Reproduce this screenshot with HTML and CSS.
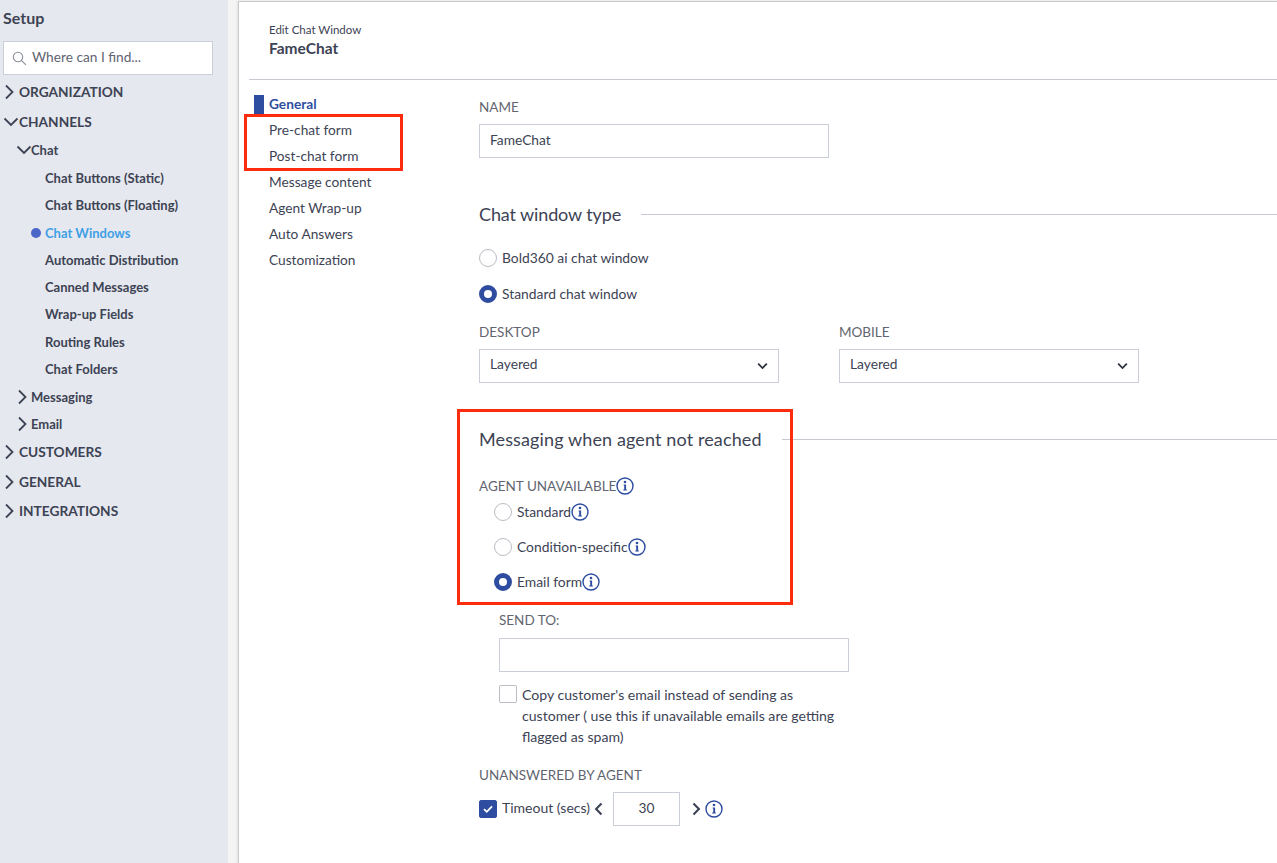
FILE: index.html
```html
<!DOCTYPE html>
<html lang="en">
<head>
<meta charset="utf-8">
<title>Edit Chat Window</title>
<link rel="stylesheet" href="styles.css">
</head>
<body>
<svg class="defs" width="0" height="0" aria-hidden="true">
  <symbol id="r" viewBox="0 0 12 16"><path d="M3 1.5 9.5 8 3 14.5" fill="none" stroke="currentColor"/></symbol>
  <symbol id="d" viewBox="0 0 16 12"><path d="M1.5 2.5 8 9l6.5-6.5" fill="none" stroke="currentColor"/></symbol>
  <symbol id="i" viewBox="0 0 18 18"><circle cx="9" cy="9" r="8" fill="none" stroke="currentColor" stroke-width="1.4"/><circle cx="9" cy="5" r="1.3" fill="currentColor"/><path d="M7.6 7.6h2.5v5h.8v1H7.2v-1h1V8.6h-.6z" fill="currentColor"/></symbol>
</svg>
<div class="app">
  <aside class="side">
    <h1 class="side-title">Setup</h1>
    <div class="search">
      <svg class="search-ico" viewBox="0 0 14 14"><circle cx="5.6" cy="5.6" r="4.4" fill="none" stroke="currentColor" stroke-width="1"/><path d="M8.8 8.8 13 13" stroke="currentColor" stroke-width="1.1" fill="none"/></svg>
      <span>Where can I find...</span>
    </div>
    <div class="n1 n-org"><svg class="car"><use href="#r"/></svg>ORGANIZATION</div>
    <div class="n1 n-chan"><svg class="car-d"><use href="#d"/></svg>CHANNELS</div>
    <div class="n2 n-chat"><svg class="car-d"><use href="#d"/></svg>Chat</div>
    <div class="n3 s1">Chat Buttons (Static)</div>
    <div class="n3">Chat Buttons (Floating)</div>
    <div class="n3 on"><i class="dot"></i>Chat Windows</div>
    <div class="n3">Automatic Distribution</div>
    <div class="n3">Canned Messages</div>
    <div class="n3">Wrap-up Fields</div>
    <div class="n3">Routing Rules</div>
    <div class="n3">Chat Folders</div>
    <div class="n2 n-msg"><svg class="car"><use href="#r"/></svg>Messaging</div>
    <div class="n2 n-eml"><svg class="car"><use href="#r"/></svg>Email</div>
    <div class="n1 n-cust"><svg class="car"><use href="#r"/></svg>CUSTOMERS</div>
    <div class="n1 n-gen"><svg class="car"><use href="#r"/></svg>GENERAL</div>
    <div class="n1 n-int"><svg class="car"><use href="#r"/></svg>INTEGRATIONS</div>
  </aside>
  <main class="panel">
    <header class="head">
      <div class="crumb">Edit Chat Window</div>
      <div class="name">FameChat</div>
    </header>
    <div class="body">
      <nav class="tabs">
        <div class="tab active">General</div>
        <div class="tab">Pre-chat form</div>
        <div class="tab">Post-chat form</div>
        <div class="tab">Message content</div>
        <div class="tab">Agent Wrap-up</div>
        <div class="tab">Auto Answers</div>
        <div class="tab">Customization</div>
      </nav>
      <section class="form">
        <label class="lbl">NAME</label>
        <div class="input name-in">FameChat</div>
        <div class="sec sec-type"><h2>Chat window type</h2><span class="rule"></span></div>
        <div class="radio r-bold"><i class="rb"></i>Bold360 ai chat window</div>
        <div class="radio r-std"><i class="rb sel"></i>Standard chat window</div>
        <div class="selects">
          <div class="sel-col">
            <label class="lbl">DESKTOP</label>
            <div class="input select">Layered<svg class="chev"><use href="#d"/></svg></div>
          </div>
          <div class="sel-col">
            <label class="lbl">MOBILE</label>
            <div class="input select">Layered<svg class="chev"><use href="#d"/></svg></div>
          </div>
        </div>
        <div class="sec sec-msg"><h2>Messaging when agent not reached</h2><span class="rule"></span></div>
        <div class="lbl lbl-au">AGENT UNAVAILABLE<svg class="info"><use href="#i"/></svg></div>
        <div class="sub">
          <div class="radio r-a"><i class="rb"></i>Standard<svg class="info"><use href="#i"/></svg></div>
          <div class="radio r-b"><i class="rb"></i>Condition-specific<svg class="info"><use href="#i"/></svg></div>
          <div class="radio r-c"><i class="rb sel"></i>Email form<svg class="info"><use href="#i"/></svg></div>
        </div>
        <div class="send">
          <label class="lbl">SEND TO:</label>
          <div class="input send-in"></div>
          <div class="copy"><i class="cb"></i><p>Copy customer's email instead of sending as customer ( use this if unavailable emails are getting flagged as spam)</p></div>
        </div>
        <label class="lbl lbl-un">UNANSWERED BY AGENT</label>
        <div class="timeout">
          <i class="cb checked"><svg viewBox="0 0 18 18"><path d="M4.5 9.2 7.6 12.2 13.5 6" fill="none" stroke="#fff" stroke-width="2"/></svg></i>
          <span class="t-lbl">Timeout (secs)</span>
          <svg class="step step-l"><use href="#r"/></svg>
          <div class="input num">30</div>
          <svg class="step"><use href="#r"/></svg>
          <svg class="info t-info"><use href="#i"/></svg>
        </div>
      </section>
    </div>
  </main>
</div>
<div class="mark mark-a"></div>
<div class="mark mark-b"></div>
</body>
</html>
```
FILE: styles.css
```css
* { box-sizing: border-box; }
html, body { margin: 0; height: 100%; overflow: hidden; }
body { font-family: "Lato", "Liberation Sans", sans-serif; color: #3d4354; background: #f4f4f5; font-size: 14px; }
.defs { position: absolute; }
.app { display: flex; height: 863px; }
.side { width: 228px; flex: none; background: #e5e8ee; padding: 9px 15px 0 3px; color: #3d4354; font-weight: 700; }
.side-title { margin: 0 0 15px; font-size: 16px; line-height: 17px; font-weight: 700; }
.search { height: 34px; width: 210px; margin-left: 0; background: #fff; border: 1px solid #c9ced8; display: flex; align-items: center; padding-left: 8px; font-weight: 400; color: #5f6472; font-size: 13.7px; line-height: 28px; }
.search span { margin: -3px 0 0 -1px; }
.search-ico { width: 15px; height: 15px; margin-right: 6px; color: #8a8f9a; }
.car { width: 12px; height: 16px; margin-right: 4px; flex: none; stroke-width: 1.8; }
.car-d { width: 16px; height: 12px; margin-right: 0; flex: none; stroke-width: 1.8; }
.n1 { display: flex; align-items: center; font-size: 13.7px; line-height: 18px; padding-left: 0; }
.n2 { display: flex; align-items: center; font-size: 13px; line-height: 18px; padding-left: 13px; }
.n2 .car-d { margin-right: -1px; }
.n2 .car { margin-right: 3px; }
.n3 { font-size: 13px; line-height: 18px; padding-left: 42px; margin-top: 9.3px; position: relative; white-space: nowrap; }
.n-org { margin-top: 8px; }
.n-chan { margin-top: 12px; }
.n-chat { margin-top: 10px; }
.n3.s1 { margin-top: 10px; }
.n-msg { margin-top: 10px; }
.n-eml { margin-top: 9px; }
.n-cust { margin-top: 10px; }
.n-gen { margin-top: 12px; }
.n-int { margin-top: 11px; }
.on { color: #3fa0e6; }
.dot { position: absolute; left: 28px; top: 4px; width: 10px; height: 10px; border-radius: 50%; background: #4a66c8; }
.panel { width: 1039px; margin: 1px 0 0 10px; background: #fff; border-left: 1px solid #c7c9cd; border-top: 1px solid #c7c9cd; box-shadow: -1px 0 2px rgba(0,0,0,.08); padding-left: 10px; }
.head { height: 78px; border-bottom: 1px solid #c7cad0; padding: 21px 0 0 20px; }
.crumb { font-size: 11.5px; line-height: 14px; color: #3d4354; }
.name { font-size: 15.5px; line-height: 18px; font-weight: 700; margin-top: 2px; }
.body { display: flex; }
.tabs { width: 230px; flex: none; padding-top: 11px; }
.tab { height: 26px; line-height: 26px; padding-left: 20px; font-size: 13.7px; position: relative; }
.tab.active { font-weight: 700; color: #2f4da0; }
.tab.active::before { content: ""; position: absolute; left: 5px; top: 4px; width: 10px; height: 19px; background: #2f4da0; }
.form { flex: 1; padding-top: 19px; min-width: 0; }
.lbl { display: block; font-size: 13.5px; line-height: 16px; color: #62656f; }
.input { height: 34px; border: 1px solid #c9ced8; background: #fff; font-size: 13.75px; line-height: 30px; padding-left: 10px; color: #3d4354; }
.name-in { width: 350px; margin-top: 9px; }
.sec { display: flex; align-items: center; }
.sec h2 { margin: 0; font-size: 18px; line-height: 22px; font-weight: 400; color: #3d4354; white-space: nowrap; }
.rule { flex: 1; height: 1px; background: #c7cad0; margin-left: 20px; }
.sec-type { margin-top: 45px; }
.sec-type h2 { letter-spacing: -.12px; }
.sec-msg h2 { letter-spacing: .12px; }
.radio { display: flex; align-items: center; font-size: 13.85px; line-height: 18px; }
.rb { width: 18px; height: 18px; border-radius: 50%; border: 1px solid #b9bcc2; background: #fff; margin-right: 5px; flex: none; }
.rb.sel { border: 5.5px solid #2f4da0; }
.r-bold { margin-top: 24px; }
.r-std { margin-top: 18px; }
.selects { display: flex; gap: 60px; margin-top: 21px; }
.sel-col { width: 300px; }
.select { margin-top: 9px; position: relative; line-height: 28px; }
.chev { position: absolute; right: 10px; top: 12px; width: 11px; height: 8px; stroke-width: 2.6; color: #2b2f3a; }
.sec-msg { margin-top: 45px; }
.lbl-au { margin-top: 27px; display: flex; align-items: center; }
.info { width: 18px; height: 18px; color: #2f4da0; flex: none; }
.sub { padding-left: 15px; }
.r-a { margin-top: 8px; }
.r-b { margin-top: 17px; }
.r-c { margin-top: 17px; }
.send { padding-left: 20px; margin-top: 21px; }
.send-in { width: 350px; margin-top: 10px; }
.copy { display: flex; width: 350px; margin-top: 13px; }
.copy p { margin: -1px 0 0; font-size: 14.1px; line-height: 21px; width: 320px; }
.cb { width: 18px; height: 18px; border: 1px solid #b9bcc2; border-radius: 2px; background: #fff; flex: none; margin-right: 5px; display: block; }
.cb.checked { background: #2f4da0; border-color: #2f4da0; margin-right: 5px; }
.cb svg { display: block; width: 16px; height: 16px; }
.lbl-un { margin-top: 20px; }
.timeout { display: flex; align-items: center; margin-top: 9px; font-size: 14px; height: 34px; }
.t-lbl { margin-top: -3px; }
.step { width: 10px; height: 14px; flex: none; stroke-width: 2.5; }
.step-l { transform: scaleX(-1); margin: 0 9px 0 4px; }
.num { width: 67px; padding: 0; text-align: center; margin-right: 11px; line-height: 30px; }
.t-info { margin-left: 4px; }
.mark { position: absolute; border: 3px solid #fc2c0c; pointer-events: none; }
.mark-a { left: 244px; top: 114px; width: 159px; height: 57px; }
.mark-b { left: 457px; top: 409px; width: 336px; height: 196px; }
```
